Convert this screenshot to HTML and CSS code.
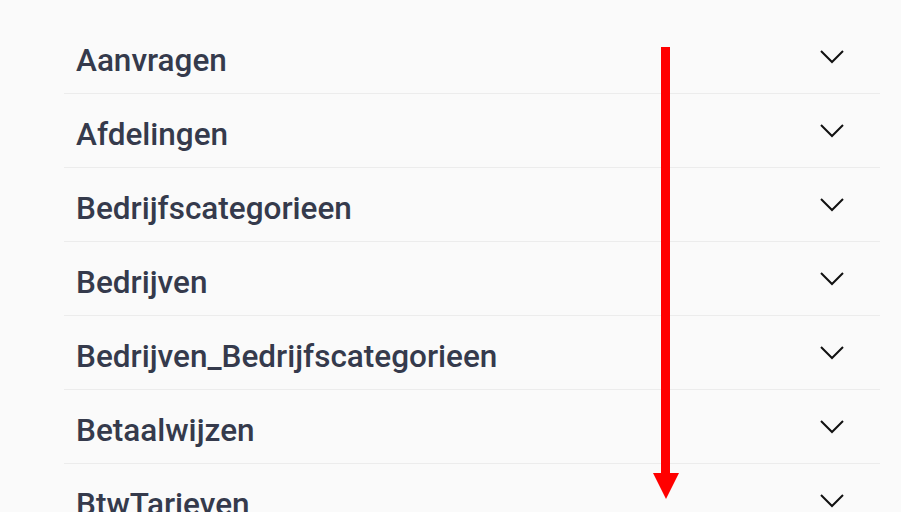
FILE: index.html
```html
<!DOCTYPE html>
<html lang="nl">
  <head>
    <meta charset="UTF-8" />
    <meta name="viewport" content="width=device-width, initial-scale=1.0" />
    <title>Tabellen</title>
    <link rel="stylesheet" href="styles.css">
  </head>
  <body>
    <div class="page">
      <ul class="tables">
        <li class="row"><span class="name">Aanvragen</span><svg class="chevron" viewBox="0 0 24 14"><path d="M1 1l11 11L23 1" /></svg></li>
        <li class="row"><span class="name">Afdelingen</span><svg class="chevron" viewBox="0 0 24 14"><path d="M1 1l11 11L23 1" /></svg></li>
        <li class="row"><span class="name">Bedrijfscategorieen</span><svg class="chevron" viewBox="0 0 24 14"><path d="M1 1l11 11L23 1" /></svg></li>
        <li class="row"><span class="name">Bedrijven</span><svg class="chevron" viewBox="0 0 24 14"><path d="M1 1l11 11L23 1" /></svg></li>
        <li class="row"><span class="name">Bedrijven_Bedrijfscategorieen</span><svg class="chevron" viewBox="0 0 24 14"><path d="M1 1l11 11L23 1" /></svg></li>
        <li class="row"><span class="name">Betaalwijzen</span><svg class="chevron" viewBox="0 0 24 14"><path d="M1 1l11 11L23 1" /></svg></li>
        <li class="row"><span class="name">BtwTarieven</span><svg class="chevron" viewBox="0 0 24 14"><path d="M1 1l11 11L23 1" /></svg></li>
      </ul>

      <!-- scroll hint -->
      <div class="arrow">
        <div class="shaft"></div>
        <div class="head"></div>
      </div>
    </div>
  </body>
</html>
```

FILE: styles.css
```css
html {
  background: #ffffff;
}

body {
  margin: 0;
  font-family: Roboto, "Liberation Sans", sans-serif;
}

.page {
  position: relative;
  height: 512px;
  overflow: hidden;
  background: #fafafa;
  padding: 20px 21px 0 64px;
  box-sizing: border-box;
}

.tables {
  list-style: none;
  margin: 0;
  padding: 0;
}

.row {
  display: flex;
  align-items: center;
  justify-content: space-between;
  height: 74px;
  box-sizing: border-box;
  padding: 8px 36px 0 12px;
  border-bottom: 1px solid #ececec;
}

.name {
  font-size: 31.5px;
  font-weight: 500;
  color: #353a4c;
}

.chevron {
  width: 24px;
  height: 14px;
  margin-top: -7px;
  fill: none;
  stroke: #111111;
  stroke-width: 2;
}

.arrow {
  position: absolute;
  left: 652px;
  top: 47px;
  width: 27px;
  display: flex;
  flex-direction: column;
  align-items: center;
}

.shaft {
  width: 9px;
  height: 426px;
  background: #ff0000;
}

.head {
  width: 0;
  height: 0;
  border-left: 13.5px solid transparent;
  border-right: 13.5px solid transparent;
  border-top: 26px solid #ff0000;
}
```
